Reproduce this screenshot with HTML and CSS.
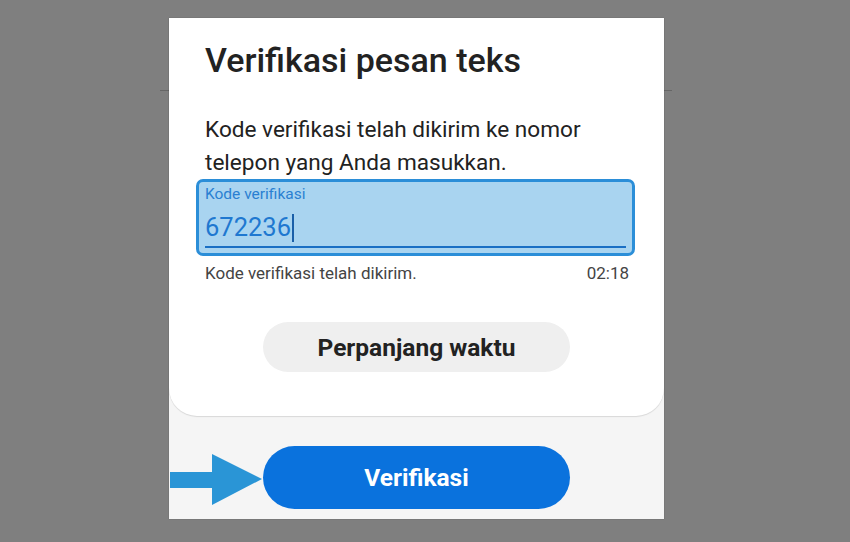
FILE: index.html
```html
<!DOCTYPE html>
<html lang="id">
<head>
    <meta charset="UTF-8">
    <meta name="viewport" content="width=device-width, initial-scale=1.0">
    <title>Verifikasi pesan teks</title>
    <link rel="stylesheet" href="styles.css">
</head>
<body>
    <div class="stage">
        <div class="phone">
            <div class="card">
                <h1 class="title">Verifikasi pesan teks</h1>
                <p class="message">Kode verifikasi telah dikirim ke nomor telepon yang Anda masukkan.</p>
                <div class="code-field">
                    <label for="code">Kode verifikasi</label>
                    <div class="code-value" id="code">672236<span class="caret"></span></div>
                </div>
                <div class="helper">
                    <span>Kode verifikasi telah dikirim.</span>
                    <span class="timer">02:18</span>
                </div>
                <div class="extend">
                    <button class="btn-extend">Perpanjang waktu</button>
                </div>
            </div>
            <div class="footer">
                <button class="btn-verify">Verifikasi</button>
            </div>
        </div>
        <svg class="arrow" width="92" height="51" viewBox="0 0 92 51">
            <polygon points="0,18 42,18 42,0 92,25 42,51 42,34 0,34" fill="#2a95d6"/>
        </svg>
    </div>
</body>
</html>
```

FILE: styles.css
```css
body {
    margin: 0;
    background-color: #7f7f7f;
    font-family: Roboto, "Noto Sans", Arial, sans-serif;
    color: #222;
}
.stage {
    position: relative;
    width: 850px;
    height: 542px;
    padding-top: 18px;
    box-sizing: border-box;
}
/* faint line from the screen behind the dialog */
.stage::before {
    content: "";
    position: absolute;
    left: 160px;
    top: 90px;
    width: 512px;
    height: 1px;
    background-color: #666;
}
.phone {
    position: relative;
    margin-left: 169px;
    width: 495px;
    height: 501px;
    background-color: #f5f5f5;
    display: flex;
    flex-direction: column;
    box-shadow: 0 0 1px rgba(0, 0, 0, 0.3);
}
.card {
    height: 398px;
    box-sizing: border-box;
    background-color: #fff;
    border-radius: 0 0 28px 28px;
    box-shadow: 0 1px 1px rgba(0, 0, 0, 0.12);
    padding: 22px 29px 0 36px;
}
.title {
    margin: 0;
    font-size: 34px;
    font-weight: 500;
    line-height: 40px;
    color: #222;
}
.message {
    margin: 33px 0 0;
    font-size: 22.6px;
    line-height: 33px;
    color: #222;
    padding-right: 30px;
}
.code-field {
    margin: 0 0 0 -9px;
    height: 77px;
    box-sizing: border-box;
    background-color: #a9d4f0;
    border: 3px solid #2b8ed8;
    border-radius: 7px;
    padding: 3px 6px 0 6px;
}
.code-field label {
    display: block;
    font-size: 15.5px;
    line-height: 18px;
    color: #2a80d2;
}
.code-value {
    font-size: 25.5px;
    line-height: 32px;
    margin-top: 8px;
    color: #1f78d0;
    padding-bottom: 3px;
    border-bottom: 2px solid #1a6fc4;
}
.caret {
    display: inline-block;
    width: 2px;
    height: 28px;
    margin-left: 1px;
    vertical-align: -6px;
    background-color: #1a5fa8;
}
.helper {
    display: flex;
    justify-content: space-between;
    margin-top: 6px;
    margin-right: 6px;
    font-size: 17px;
    line-height: 22px;
    color: #444;
}
.extend {
    display: flex;
    justify-content: center;
    margin-top: 38px;
    margin-left: -7px;
}
button {
    font-family: inherit;
    border: none;
    cursor: pointer;
}
.btn-extend {
    width: 307px;
    height: 50px;
    border-radius: 25px;
    background-color: #efefef;
    font-size: 24.5px;
    font-weight: 700;
    color: #222;
}
.footer {
    display: flex;
    justify-content: center;
    padding-top: 30px;
}
.btn-verify {
    width: 307px;
    height: 63px;
    border-radius: 32px;
    background-color: #0a72dd;
    font-size: 24.5px;
    font-weight: 700;
    color: #fff;
}
.arrow {
    position: absolute;
    left: 170px;
    top: 454px;
}
```
